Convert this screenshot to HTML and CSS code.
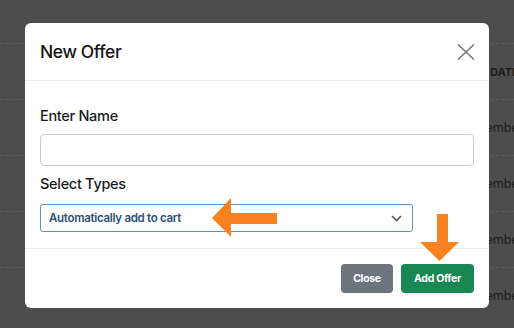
FILE: index.html
```html
<!DOCTYPE html>
<html lang="en">
<head>
    <meta charset="UTF-8">
    <meta name="viewport" content="width=device-width, initial-scale=1.0">
    <title>New Offer</title>
    <link rel="stylesheet" href="styles.css">
</head>
<body>
    <div class="page">
        <div class="table">
            <div class="row head"><span class="cell">DATE</span></div>
            <div class="row"><span class="cell">November</span></div>
            <div class="row"><span class="cell">November</span></div>
            <div class="row"><span class="cell">November</span></div>
            <div class="row"><span class="cell">November</span></div>
        </div>
    </div>

    <div class="modal">
        <div class="modal-header">
            <h5 class="modal-title">New Offer</h5>
            <button class="btn-close" aria-label="Close">
                <svg width="18" height="16" viewBox="0 0 18 16"><path d="M1 0.5 L17 15.5 M17 0.5 L1 15.5" stroke="#7a7a7a" stroke-width="1.6" fill="none"/></svg>
            </button>
        </div>
        <div class="modal-body">
            <label class="form-label" for="offer-name">Enter Name</label>
            <input type="text" id="offer-name" class="form-control">
            <label class="form-label types" for="offer-type">Select Types</label>
            <div class="select">
                <span>Automatically add to cart</span>
                <svg width="11" height="7" viewBox="0 0 11 7"><path d="M1 1 L5.5 5.5 L10 1" stroke="#555" stroke-width="1.6" fill="none"/></svg>
            </div>
        </div>
        <div class="modal-footer">
            <button class="btn btn-secondary">Close</button>
            <button class="btn btn-success">Add Offer</button>
        </div>
    </div>

    <svg class="marks" width="514" height="328" viewBox="0 0 514 328">
        <polygon points="212,218 231,198 231,213 277,213 277,224 231,224 231,237" fill="#f7821f"/>
        <polygon points="437,214 448,214 448,242 459,242 439.5,261 420,242 437,242" fill="#f7821f"/>
    </svg>
</body>
</html>
```

FILE: styles.css
```css
body {
    margin: 0;
    width: 514px;
    height: 328px;
    overflow: hidden;
    background-color: #4d4d4d;
    font-family: Inter, 'Noto Sans', sans-serif;
    position: relative;
}

.table {
    padding-top: 43px;
}

.row {
    height: 56px;
    border-top: 1px dashed #5c5c5c;
    display: flex;
    align-items: center;
    padding-left: 462px;
    box-sizing: border-box;
    overflow: hidden;
}

.cell {
    font-size: 12.5px;
    color: #1c1c1c;
    white-space: nowrap;
}

.head .cell {
    font-weight: 700;
    font-size: 11px;
    padding-left: 28px;
}

.modal {
    position: absolute;
    left: 25px;
    top: 23px;
    width: 464px;
    height: 285px;
    background-color: #fff;
    border-radius: 6px;
    display: flex;
    flex-direction: column;
}

.modal-header {
    height: 58px;
    padding: 0 14px 0 15px;
    display: flex;
    align-items: center;
    justify-content: space-between;
    border-bottom: 1px solid #e9ecef;
    box-sizing: border-box;
}

.modal-title {
    margin: 0;
    font-size: 17.5px;
    font-weight: 500;
    color: #151515;
    letter-spacing: -0.4px;
}

.btn-close {
    border: none;
    background: none;
    padding: 0;
    display: flex;
}

.modal-body {
    padding: 25px 15px 14px;
    display: flex;
    flex-direction: column;
    flex: 1;
}

.form-label {
    font-size: 14.5px;
    font-weight: 500;
    color: #1b1b1b;
    letter-spacing: -0.3px;
    line-height: 20px;
    margin-bottom: 8px;
}

.form-label.types {
    margin-top: 8px;
    margin-bottom: 10px;
}

.form-control {
    height: 32px;
    border: 1px solid #c9cbcd;
    border-radius: 4px;
    box-sizing: border-box;
    margin: 0;
}

.select {
    width: 373px;
    height: 28px;
    box-sizing: border-box;
    border: 1.5px solid #5b92c9;
    border-radius: 3px;
    display: flex;
    align-items: center;
    justify-content: space-between;
    padding: 0 10px 0 8px;
}

.select span {
    font-size: 11.5px;
    font-weight: 600;
    color: #2d4f73;
    letter-spacing: -0.3px;
}

.modal-footer {
    height: 60px;
    border-top: 1px solid #e9ecef;
    box-sizing: border-box;
    display: flex;
    justify-content: flex-end;
    align-items: flex-start;
    gap: 8px;
    padding: 15px 15px 0;
}

.btn {
    height: 29px;
    border: none;
    border-radius: 4px;
    color: #fff;
    font-family: Inter, 'Noto Sans', sans-serif;
    font-size: 10.5px;
    font-weight: 700;
    letter-spacing: -0.3px;
    padding: 0;
}

.btn-secondary {
    width: 52px;
    background-color: #6c757d;
}

.btn-success {
    width: 73px;
    background-color: #198754;
}

.marks {
    position: absolute;
    left: 0;
    top: 0;
}
```
